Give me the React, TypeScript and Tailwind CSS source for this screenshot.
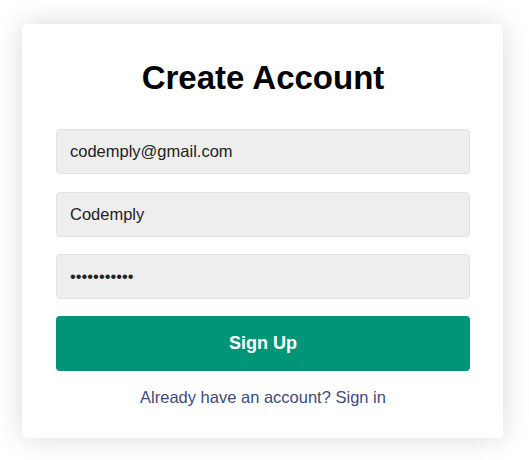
import React from "react";

export default function App() {
  const inputCls =
    "block w-full h-[45px] rounded-[4px] border border-[#e2e2e2] bg-[#eeeeee] px-[13px] text-[16.5px] text-[#222222] outline-none";
  return (
    <div
      className="min-h-[460px] w-[529px] bg-white pt-[24px] pl-[22px]"
      style={{ fontFamily: '"Liberation Sans", Arial, sans-serif' }}
    >
      <div className="w-[481px] rounded-[5px] bg-white pt-[35px] pb-[32px] pl-[34px] pr-[33px] shadow-[0_0_28px_rgba(0,0,0,0.15)]">
        <h1 className="text-center text-[33px] font-bold leading-[37px] text-black">
          Create Account
        </h1>
        <form className="mt-[33px] flex flex-col gap-[17.5px]" onSubmit={(e) => e.preventDefault()}>
          <input className={inputCls} type="email" defaultValue="codemply@gmail.com" />
          <input className={inputCls} type="text" defaultValue="Codemply" />
          <input className={inputCls} type="password" defaultValue="codemply123" />
        </form>
        <button
          type="button"
          className="mt-[17px] block h-[55px] w-full rounded-[4px] bg-[#009578] text-[18px] font-bold text-white"
        >
          Sign Up
        </button>
        <p className="mt-[17px] text-center text-[16.5px] leading-[18px] text-[#3e4a7b]">
          Already have an account? Sign in
        </p>
      </div>
    </div>
  );
}
